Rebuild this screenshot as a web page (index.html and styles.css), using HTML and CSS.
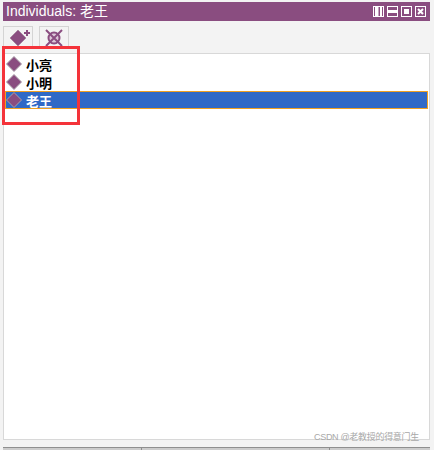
FILE: index.html
```html
<!DOCTYPE html>
<html lang="en">
<head>
	<meta charset="UTF-8">
	<title>Individuals</title>
	<link rel="stylesheet" href="styles.css">
</head>
<body>
	<div class="panel">
		<div class="title">
			<span class="title-text">Individuals: 老王</span>
			<div class="win-btns">
				<svg width="11" height="11" viewBox="0 0 11 11"><rect width="11" height="11" fill="#fff"/><path d="M1 1h1v9H1zM5.500 1h1.500v9H5.500zM9 1h1v9H9z" fill="#8a4d80"/></svg>
				<svg width="11" height="11" viewBox="0 0 11 11"><rect x=".5" y=".5" width="10" height="10" fill="none" stroke="#fff"/><rect x="1" y="4" width="9" height="3" fill="#fff"/></svg>
				<svg width="11" height="11" viewBox="0 0 11 11"><rect x=".5" y=".5" width="10" height="10" fill="none" stroke="#fff"/><rect x="3" y="3" width="5" height="5" fill="#fff"/></svg>
				<svg width="11" height="11" viewBox="0 0 11 11"><rect x=".5" y=".5" width="10" height="10" fill="none" stroke="#fff"/><path d="M3 3l5 5M8 3l-5 5" stroke="#fff" stroke-width="2"/></svg>
			</div>
		</div>
		<div class="toolbar">
			<button class="tool">
				<svg width="26" height="20" viewBox="0 0 26 20"><path d="M13 3l8 8-8 8-8-8z" fill="#8a4d80" stroke="#a98aa4"/><path d="M22 3v6M19 6h6" stroke="#8a4d80" stroke-width="2"/></svg>
			</button>
			<button class="tool">
				<svg width="20" height="20" viewBox="0 0 20 20"><circle cx="10" cy="11" r="5.500" fill="#dcc8d8" stroke="#8a4d80" stroke-width="2"/><path d="M2 3l16 16M18 3L2 19" stroke="#8a4d80" stroke-width="2"/></svg>
			</button>
		</div>
		<ul class="list">
			<li class="row">
				<svg class="diamond" width="16" height="16" viewBox="0 0 16 16"><path d="M8 .5L15.500 8 8 15.500.5 8z" fill="#8a4d80" stroke="#a9a0a8"/></svg>
				<span>小亮</span>
			</li>
			<li class="row">
				<svg class="diamond" width="16" height="16" viewBox="0 0 16 16"><path d="M8 .5L15.500 8 8 15.500.5 8z" fill="#8a4d80" stroke="#a9a0a8"/></svg>
				<span>小明</span>
			</li>
			<li class="row selected">
				<svg class="diamond" width="16" height="16" viewBox="0 0 16 16"><path d="M8 .5L15.500 8 8 15.500.5 8z" fill="#8a4d80" stroke="#a9a0a8"/></svg>
				<span>老王</span>
			</li>
		</ul>
		<div class="marker"></div>
		<div class="watermark">CSDN @老教授的得意门生</div>
		<div class="tabs">
			<div class="tab tab-a"></div>
			<div class="tab tab-b"></div>
			<div class="tab tab-c"></div>
		</div>
	</div>
</body>
</html>
```

FILE: styles.css
```css
*{margin:0;padding:0;box-sizing:border-box;}
html,body{height:100%;overflow:hidden;}
body{background-color:#f3f3f3;font-family:"Liberation Sans","Noto Sans CJK SC",sans-serif;}

.panel{width:434px;height:450px;padding:2px 4px 0 3px;position:relative;display:flex;flex-direction:column;}

/*title bar*/
.title{height:19px;background-color:#8a4d80;color:#fff;font-size:14px;line-height:19px;padding:0 3px;display:flex;justify-content:space-between;align-items:center;flex:none;}
.win-btns{display:flex;gap:3px;margin-right:1px;}
.win-btns svg{display:block;}

/*toolbar*/
.toolbar{height:32px;padding-top:5px;display:flex;gap:6px;flex:none;}
.tool{width:30px;height:22px;background-color:#f3f3f3;border:1px solid #d4d4d4;border-bottom:0;display:flex;align-items:flex-start;justify-content:center;}
.tool svg{flex:none;}

/*list*/
.list{list-style:none;flex:none;height:387px;margin-bottom:7px;background-color:#fff;border:1px solid #d8d8d8;padding-top:1px;}
.row{height:18px;margin:0 1px;border:1px solid transparent;display:flex;align-items:center;gap:4px;font-size:13px;font-weight:bold;color:#000;}
.selected{background-color:#3069c6;color:#fff;border-color:#f0a020;}

/*red annotation*/
.marker{position:absolute;left:2px;top:46px;width:78px;height:79px;border:3px solid #f4333a;}

.watermark{position:absolute;left:314px;top:431px;font-size:9px;line-height:12px;color:#a8a8a8;letter-spacing:-.3px;}

/*bottom tabs*/
.tabs{height:3px;display:flex;flex:none;border-top:1px solid #8f8f8f;background-color:#cccccc;}
.tab{height:100%;border-right:1px solid #8f8f8f;}
.tab-a{width:139px;}
.tab-b{width:188px;}
.tab-c{flex:1;border-right:0;}
```
